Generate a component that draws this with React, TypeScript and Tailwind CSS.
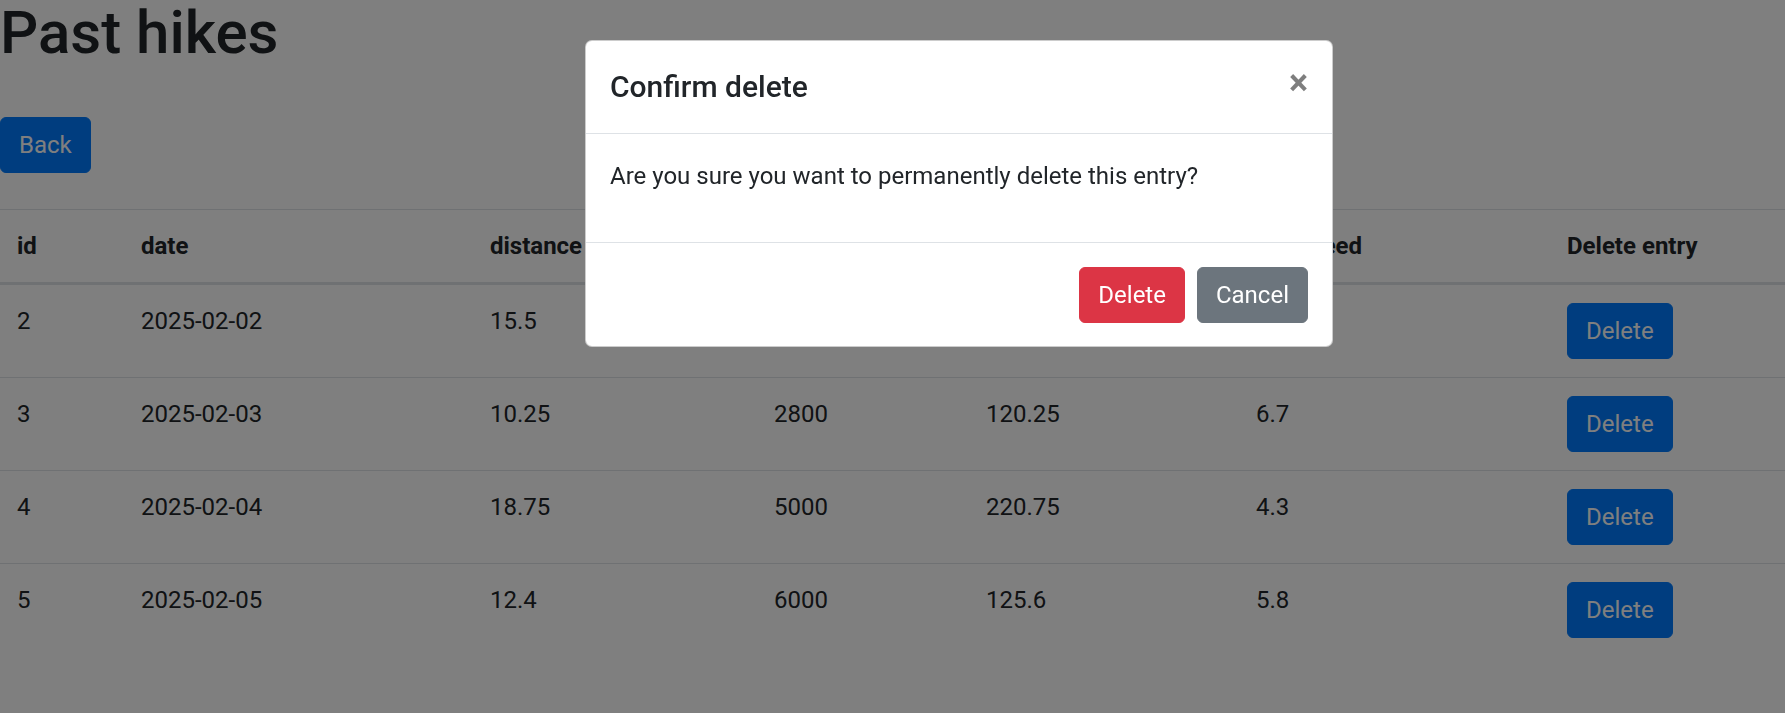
const hikes = [
  { id: 2, date: "2025-02-02", distance: "15.5", elevation: "3500", duration: "180.5", avgSpeed: "5.2" },
  { id: 3, date: "2025-02-03", distance: "10.25", elevation: "2800", duration: "120.25", avgSpeed: "6.7" },
  { id: 4, date: "2025-02-04", distance: "18.75", elevation: "5000", duration: "220.75", avgSpeed: "4.3" },
  { id: 5, date: "2025-02-05", distance: "12.4", elevation: "6000", duration: "125.6", avgSpeed: "5.8" },
];

const th = "border-t border-b-[3px] border-[#dee2e6] px-[16px] py-[18px] text-left align-top font-bold";

function App() {
  return (
    <div className="relative min-h-[713px] overflow-hidden bg-white font-['Roboto',sans-serif] text-[24px] leading-[36px] text-[#212529]">
      <h1 className="-mt-[3px] text-[60px] font-medium leading-[72px]">Past hikes</h1>

      {/* h1 margin + <br> in the original */}
      <div className="mt-[48px] flex">
        <button className="rounded-[6px] border border-[#007bff] bg-[#007bff] px-[18px] py-[9px] text-[24px] leading-[36px] text-white">
          Back
        </button>
      </div>

      <table className="mt-[36px] w-full table-fixed border-separate border-spacing-0">
        <thead>
          <tr>
            <th className={`${th} w-[125px] !pl-[17px]`}>id</th>
            <th className={`${th} w-[349px]`}>date</th>
            <th className={`${th} w-[284px]`}>distance</th>
            <th className={`${th} w-[212px]`}>elevation</th>
            <th className={`${th} w-[270px]`}>duration</th>
            <th className={`${th} w-[311px]`}>avgSpeed</th>
            <th className={th}>Delete entry</th>
          </tr>
        </thead>
        <tbody>
          {hikes.map((h, i) => {
            const td = `px-[16px] py-[18px] align-top ${i < hikes.length - 1 ? "border-b border-[#dee2e6]" : ""}`;
            return (
              <tr key={h.id}>
                <td className={`${td} !pl-[17px]`}>{h.id}</td>
                <td className={td}>{h.date}</td>
                <td className={td}>{h.distance}</td>
                <td className={td}>{h.elevation}</td>
                <td className={td}>{h.duration}</td>
                <td className={td}>{h.avgSpeed}</td>
                <td className={td}>
                  <button className="rounded-[6px] border border-[#007bff] bg-[#007bff] px-[18px] py-[9px] text-[24px] leading-[36px] text-white">
                    Delete
                  </button>
                </td>
              </tr>
            );
          })}
        </tbody>
      </table>

      {/* backdrop */}
      <div className="fixed inset-0 bg-black/50" />

      {/* modal */}
      <div className="fixed inset-0 overflow-hidden">
        <div className="ml-[585px] mt-[40px] w-[748px] rounded-[7px] border border-black/20 bg-white">
          <div className="flex items-start border-b border-[#dee2e6] px-[24px] pb-[24px] pt-[23px]">
            <h5 className="text-[30px] font-medium leading-[45px]">Confirm delete</h5>
            <button className="ml-auto mt-[1px] text-[36px] font-bold leading-none text-black opacity-50 [text-shadow:0_1px_0_#fff]">
              ×
            </button>
          </div>
          <div className="px-[24px] pb-[48px] pt-[24px]">
            <p>Are you sure you want to permanently delete this entry?</p>
          </div>
          <div className="flex items-center justify-end border-t border-[#dee2e6] px-[18px] pb-[17px] pt-[18px]">
            <button className="m-[6px] rounded-[6px] border border-[#dc3545] bg-[#dc3545] px-[18px] py-[9px] leading-[36px] text-white">
              Delete
            </button>
            <button className="m-[6px] rounded-[6px] border border-[#6c757d] bg-[#6c757d] px-[18px] py-[9px] leading-[36px] text-white">
              Cancel
            </button>
          </div>
        </div>
      </div>
    </div>
  );
}

export default App;
